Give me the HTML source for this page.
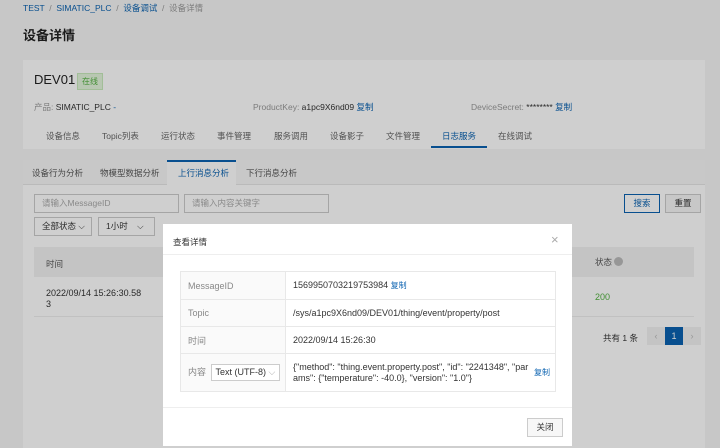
<!DOCTYPE html>
<html><head><meta charset="utf-8"><style>
*{box-sizing:border-box;margin:0;padding:0}
body{width:720px;height:448px;overflow:hidden;background:#f5f5f5;font-family:"Liberation Sans","Noto Sans CJK SC",sans-serif;font-size:9px;color:#333;position:relative}
.a{position:absolute}
.blue{color:#0a62b0}
.card{background:#fff;position:absolute}
.inp{position:absolute;border:1px solid #ccc;background:#fff;color:#aaa;padding-left:7px;line-height:17px;font-size:8.5px}
.ov{position:absolute;left:0;top:0;width:720px;height:448px;background:rgba(0,0,0,0.19)}
.modal{position:absolute;left:163px;top:224px;width:409px;height:222px;background:#fff}
table{border-collapse:collapse}
td{border:1px solid #e8e8e8;font-size:9px;padding-left:7px}
</style></head><body>
<div class="a" style="left:23px;top:2px;font-size:8.5px;color:#999"><span class="blue">TEST</span> &nbsp;/ &nbsp;<span class="blue">SIMATIC_PLC</span> &nbsp;/ &nbsp;<span class="blue">设备调试</span> &nbsp;/ &nbsp;设备详情</div>
<div class="a" style="left:23px;top:25px;font-size:13px;font-weight:bold;color:#222">设备详情</div>
<div class="card" style="left:23px;top:60px;width:682px;height:89px">
 <div class="a" style="left:11px;top:12px;font-size:13px;color:#222">DEV01</div>
 <div class="a" style="left:54px;top:13px;background:#e3f5dc;color:#52b040;font-size:8px;padding:2px 4px;border:1px solid #c8eabc">在线</div>
 <div class="a" style="left:11px;top:41px;font-size:8.5px;color:#999">产品: <span style="color:#333">SIMATIC_PLC</span> <span class="blue">-</span></div>
 <div class="a" style="left:230px;top:41px;font-size:8.5px;color:#999">ProductKey: <span style="color:#333">a1pc9X6nd09</span> <span class="blue">复制</span></div>
 <div class="a" style="left:448px;top:41px;font-size:8.5px;color:#999">DeviceSecret: <span style="color:#333">********</span> <span class="blue">复制</span></div>
 <div class="a" style="left:0;top:70px;font-size:8.5px;color:#666;white-space:nowrap">
  <span class="a" style="left:23px">设备信息</span><span class="a" style="left:79px">Topic列表</span><span class="a" style="left:138px">运行状态</span><span class="a" style="left:194px">事件管理</span><span class="a" style="left:251px">服务调用</span><span class="a" style="left:307px">设备影子</span><span class="a" style="left:363px">文件管理</span><span class="a blue" style="left:419px">日志服务</span><span class="a" style="left:475px">在线调试</span>
 </div>
 <div class="a" style="left:408px;top:86px;width:56px;height:2px;background:#0a62b0"></div>
</div>
<div class="card" style="left:23px;top:160px;width:682px;height:288px">
 <div class="a" style="left:0;top:0;width:682px;height:25px;background:#f7f7f7;border-bottom:1px solid #e5e5e5"></div>
 <div class="a" style="left:144px;top:0;width:69px;height:26px;background:#fff;border-top:2px solid #0a62b0"></div>
 <div class="a" style="left:9px;top:7px;font-size:8.5px;color:#555">设备行为分析</div>
 <div class="a" style="left:77px;top:7px;font-size:8.5px;color:#555">物模型数据分析</div>
 <div class="a blue" style="left:155px;top:7px;font-size:8.5px">上行消息分析</div>
 <div class="a" style="left:223px;top:7px;font-size:8.5px;color:#555">下行消息分析</div>
 <div class="inp" style="left:11px;top:34px;width:145px;height:19px">请输入MessageID</div>
 <div class="inp" style="left:161px;top:34px;width:145px;height:19px">请输入内容关键字</div>
 <div class="inp" style="left:601px;top:34px;width:36px;height:19px;border-color:#0a62b0;color:#0a62b0;text-align:center;padding:0">搜索</div>
 <div class="inp" style="left:642px;top:34px;width:36px;height:19px;color:#333;text-align:center;padding:0;background:#f5f5f5">重置</div>
 <div class="inp" style="left:11px;top:57px;width:58px;height:19px;color:#333">全部状态 ⌵</div>
 <div class="inp" style="left:75px;top:57px;width:57px;height:19px;color:#333">1小时 &nbsp;&nbsp;&nbsp;⌵</div>
 <div class="a" style="left:11px;top:87px;width:660px;height:30px;background:#f2f2f2"></div>
 <div class="a" style="left:23px;top:98px;font-size:8.5px;color:#555">时间</div>
 <div class="a" style="left:572px;top:96px;font-size:8.5px;color:#555">状态 <span style="display:inline-block;width:9px;height:9px;border-radius:50%;background:#bbb;vertical-align:-1px"></span></div>
 <div class="a" style="left:23px;top:128px;font-size:9px;color:#333;line-height:11px">2022/09/14 15:26:30.58<br>3</div>
 <div class="a" style="left:572px;top:132px;font-size:9px;color:#52b040">200</div>
 <div class="a" style="left:11px;top:156px;width:660px;height:1px;background:#eee"></div>
 <div class="a" style="left:580px;top:172px;font-size:8.5px">共有 1 条</div>
 <div class="a" style="left:624px;top:167px;width:18px;height:18px;background:#f2f2f2;color:#bbb;text-align:center;line-height:18px">‹</div>
 <div class="a" style="left:642px;top:167px;width:18px;height:18px;background:#0a62b0;color:#fff;text-align:center;line-height:18px">1</div>
 <div class="a" style="left:660px;top:167px;width:18px;height:18px;background:#f2f2f2;color:#bbb;text-align:center;line-height:18px">›</div>
</div>
<div class="ov"></div>
<div class="modal">
 <div class="a" style="left:10px;top:12px;font-size:8.5px;color:#333">查看详情</div>
 <div class="a" style="left:388px;top:8px;font-size:13px;color:#aaa">×</div>
 <div class="a" style="left:0;top:30px;width:409px;height:1px;background:#eee"></div>
 <table class="a" style="left:17px;top:47px;width:376px">
  <tr style="height:28px"><td style="width:105px;color:#888;background:#fafafa">MessageID</td><td>1569950703219753984 <span class="blue" style="font-size:8px">复制</span></td></tr>
  <tr style="height:27px"><td style="color:#888;background:#fafafa">Topic</td><td>/sys/a1pc9X6nd09/DEV01/thing/event/property/post</td></tr>
  <tr style="height:27px"><td style="color:#888;background:#fafafa">时间</td><td>2022/09/14 15:26:30</td></tr>
  <tr style="height:38px"><td style="color:#888;background:#fafafa">内容 <span style="display:inline-block;border:1px solid #ccc;background:#fff;color:#333;padding:2px 4px;margin-left:2px">Text (UTF-8) <span style="color:#aaa">⌵</span></span></td><td><div style="display:flex;align-items:center;line-height:11px"><span style="width:238px;word-break:break-all">{"method": "thing.event.property.post", "id": "2241348", "params": {"temperature": -40.0}, "version": "1.0"}</span><span class="blue" style="font-size:8px;margin-left:3px">复制</span></div></td></tr>
 </table>
 <div class="a" style="left:0;top:183px;width:409px;height:1px;background:#eee"></div>
 <div class="a" style="left:364px;top:194px;width:36px;height:19px;border:1px solid #ccc;background:#f7f7f7;text-align:center;line-height:17px;font-size:8.5px">关闭</div>
</div>
</body></html>
